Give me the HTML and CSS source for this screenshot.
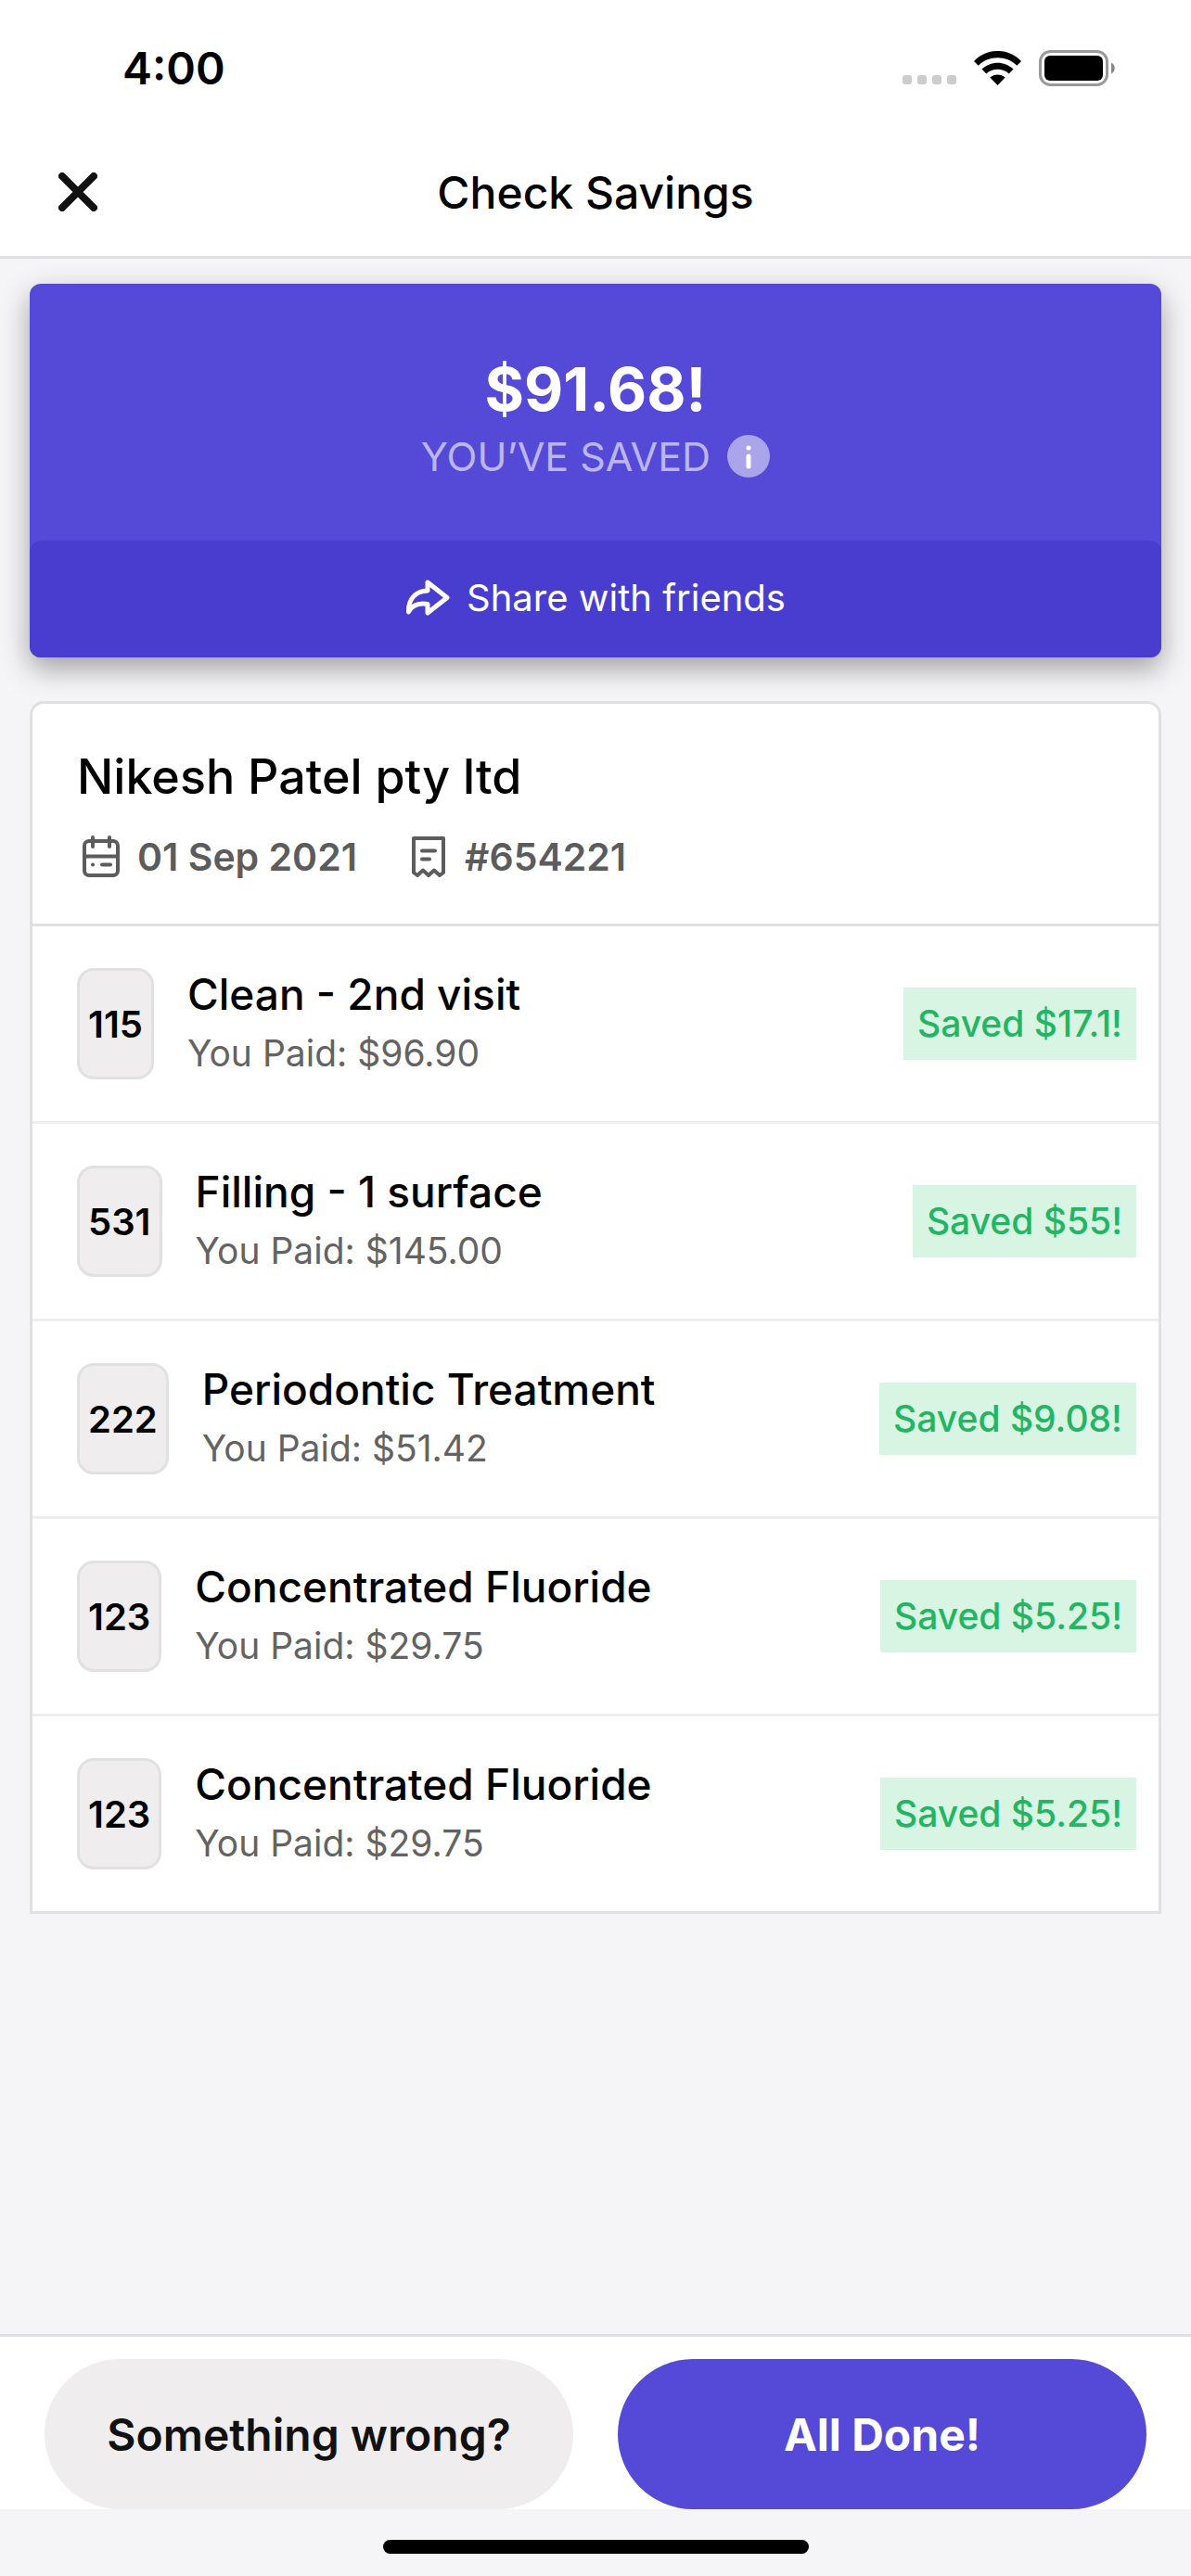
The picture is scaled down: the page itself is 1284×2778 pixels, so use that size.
FILE: index.html
```html
<!DOCTYPE html>
<html lang="en">
<head>
    <meta charset="UTF-8">
    <meta name="viewport" content="width=device-width, initial-scale=1.0">
    <title>Check Savings</title>
    <link rel="stylesheet" href="styles.css">
</head>
<body>
    <div class="status-bar">
        <span class="time">4:00</span>
        <div class="status-icons">
            <svg width="58" height="12" viewBox="0 0 58 12" fill="#cccccc">
                <rect x="0" width="10" height="10" rx="3"/>
                <rect x="16" width="10" height="10" rx="3"/>
                <rect x="32" width="10" height="10" rx="3"/>
                <rect x="48" width="10" height="10" rx="3"/>
            </svg>
            <svg width="51" height="38" viewBox="0 0 51 38">
                <path d="M0 11C14-3.700 37-3.700 51 11L46.300 15.700C35 4.500 16 4.500 4.700 15.700Z"/>
                <path d="M8.500 19.600C18 10.400 33 10.400 42.500 19.600L37.700 24.400C31 18.200 20 18.200 13.300 24.400Z"/>
                <path d="M17.300 28.600C22 24.500 29 24.500 33.700 28.600L25.500 37Z"/>
            </svg>
            <svg width="82" height="39" viewBox="0 0 82 39">
                <rect x="1.500" y="1.500" width="72" height="36" rx="11" fill="none" stroke="#999999" stroke-width="3"/>
                <rect x="6" y="6" width="63" height="27" rx="6"/>
                <path d="M78 13.500C83 16 83 23 78 25.500Z" fill="#888888"/>
            </svg>
        </div>
    </div>
    <header class="header">
        <button class="close-button" type="button" aria-label="Close">
            <svg width="42" height="42" viewBox="0 0 42 42" fill="none" stroke="#111111" stroke-width="8" stroke-linecap="round">
                <path d="M4 4L38 38M38 4L4 38"/>
            </svg>
        </button>
        <h1>Check Savings</h1>
    </header>
    <main class="content">
        <section class="savings">
            <div class="savings-total">
                <p class="amount">$91.68!</p>
                <div class="savings-label">
                    <span>YOU’VE SAVED</span>
                    <button class="info-button" type="button" aria-label="About your savings">
                        <svg width="46" height="46" viewBox="0 0 46 46">
                            <circle cx="23" cy="23" r="23" fill="#aaa4eb"/>
                            <circle cx="23" cy="14" r="2.500" fill="#ffffff"/>
                            <path d="M23 23V34" stroke="#ffffff" stroke-width="5" stroke-linecap="round"/>
                        </svg>
                    </button>
                </div>
            </div>
            <button class="share-button" type="button">
                <svg width="48" height="40" viewBox="0 0 48 40" fill="none" stroke="#ffffff" stroke-width="5" stroke-linejoin="round">
                    <path d="M24 4L45 20.500L24 37V27.500C14 26 7 29 3.500 36C3 22 11 13.500 24 13Z"/>
                </svg>
                Share with friends
            </button>
        </section>
        <section class="receipt">
            <div class="receipt-header">
                <h2>Nikesh Patel pty ltd</h2>
                <div class="receipt-meta">
                    <span class="meta-item">
                        <svg width="46" height="46" viewBox="0 0 46 46" fill="none" stroke="#5c5c5c" stroke-width="4" stroke-linecap="round">
                            <rect x="5" y="6" width="36" height="37" rx="5"/>
                            <path d="M5 22.500H41M14 2V12M32 2V12M24 31.500H33M14 31.500H14.100"/>
                        </svg>
                        01 Sep 2021
                    </span>
                    <span class="meta-item">
                        <svg width="46" height="46" viewBox="0 0 46 46" fill="none" stroke="#5c5c5c" stroke-width="4" stroke-linecap="round" stroke-linejoin="round">
                            <path d="M7 3H39V40L35 43L29 37.500L23 43L17 37.500L11 43L7 40Z"/>
                            <path d="M16 16.500H30M16 25.500H24"/>
                        </svg>
                        #654221
                    </span>
                </div>
            </div>
            <ul class="items">
                <li class="item">
                    <span class="code">115</span>
                    <div class="item-text">
                        <h3>Clean - 2nd visit</h3>
                        <p>You Paid: $96.90</p>
                    </div>
                    <span class="saved">Saved $17.1!</span>
                </li>
                <li class="item">
                    <span class="code">531</span>
                    <div class="item-text">
                        <h3>Filling - 1 surface</h3>
                        <p>You Paid: $145.00</p>
                    </div>
                    <span class="saved">Saved $55!</span>
                </li>
                <li class="item">
                    <span class="code">222</span>
                    <div class="item-text">
                        <h3>Periodontic Treatment</h3>
                        <p>You Paid: $51.42</p>
                    </div>
                    <span class="saved">Saved $9.08!</span>
                </li>
                <li class="item">
                    <span class="code">123</span>
                    <div class="item-text">
                        <h3>Concentrated Fluoride</h3>
                        <p>You Paid: $29.75</p>
                    </div>
                    <span class="saved">Saved $5.25!</span>
                </li>
                <li class="item">
                    <span class="code">123</span>
                    <div class="item-text">
                        <h3>Concentrated Fluoride</h3>
                        <p>You Paid: $29.75</p>
                    </div>
                    <span class="saved">Saved $5.25!</span>
                </li>
            </ul>
        </section>
    </main>
    <footer class="footer">
        <button class="button button-secondary" type="button">Something wrong?</button>
        <button class="button button-primary" type="button">All Done!</button>
    </footer>
    <div class="home-area">
        <div class="home-indicator"></div>
    </div>
</body>
</html>
```
FILE: styles.css
```css
* {
    box-sizing: border-box;
}
body {
    margin: 0;
    font-family: 'Inter', sans-serif;
    background-color: #f5f5f7;
    color: black;
    display: flex;
    flex-direction: column;
    min-height: 100vh;
}
h1, h2, h3, p, ul {
    margin: 0;
    padding: 0;
    font-weight: 500;
}
button {
    border: none;
    padding: 0;
    background: none;
    font-family: inherit;
    cursor: pointer;
}
svg {
    display: block;
    flex: none;
}

/* Status bar */
.status-bar {
    display: flex;
    align-items: center;
    justify-content: space-between;
    height: 138px;
    padding: 8px 82px 0 132px;
    background-color: white;
}
.time {
    font-size: 48px;
    font-weight: 600;
}
.status-icons {
    display: flex;
    align-items: flex-end;
    gap: 19px;
}

/* Header */
.header {
    display: grid;
    grid-template-columns: 1fr auto 1fr;
    align-items: center;
    height: 141px;
    padding: 0 63px;
    background-color: white;
    border-bottom: 3px solid #e0e0e2;
}
.close-button {
    justify-self: start;
}
.header h1 {
    font-size: 48px;
}

.content {
    flex: 1;
    padding: 27px 32px;
}

/* Savings card */
.savings {
    border-radius: 12px;
    background-color: #554ad7;
    color: white;
    box-shadow: 0 12px 30px rgba(0, 0, 0, 0.35);
}
.savings-total {
    padding: 75px 24px 58px;
    text-align: center;
}
.amount {
    font-size: 65px;
    line-height: 78px;
    font-weight: 700;
}
.savings-label {
    display: flex;
    align-items: center;
    justify-content: center;
    gap: 18px;
    font-size: 43px;
    line-height: 66px;
    color: #bbb6f1;
}
.share-button {
    display: flex;
    align-items: center;
    justify-content: center;
    gap: 18px;
    width: 100%;
    height: 126px;
    padding-bottom: 4px;
    border-radius: 12px;
    background-color: #493dd0;
    color: white;
    font-size: 40px;
}

/* Receipt */
.receipt {
    margin-top: 47px;
    border: 3px solid #e0e0e2;
    border-radius: 15px 15px 0 0;
    background-color: white;
}
.receipt-header {
    padding: 46px 48px 45px;
    border-bottom: 3px solid #e0e0e2;
}
.receipt-header h2 {
    font-size: 52px;
    line-height: 66px;
}
.receipt-meta {
    display: flex;
    gap: 54px;
    margin-top: 26px;
    padding-left: 3px;
    font-size: 41px;
    line-height: 54px;
    font-weight: 600;
    color: #5c5c5c;
}
.meta-item {
    display: flex;
    align-items: center;
    gap: 16px;
}
.items {
    list-style: none;
}
.item {
    display: flex;
    align-items: center;
    height: 213px;
    padding: 0 24px 0 48px;
    border-bottom: 3px solid #eeeeee;
}
.item:last-child {
    height: 210px;
    border-bottom: none;
}
.code {
    display: flex;
    align-items: center;
    height: 120px;
    padding: 0 9px;
    border: 3px solid #e2e1e2;
    border-radius: 18px;
    background-color: #efedee;
    font-size: 40px;
    font-weight: 600;
}
.item-text {
    flex: 1;
    margin-left: 36px;
    line-height: 64px;
}
.item-text h3 {
    font-size: 46px;
}
.item-text p {
    font-size: 39px;
    font-weight: 400;
    color: #636363;
}
.saved {
    padding: 0 15px;
    background-color: #d8f4e2;
    color: #23b564;
    font-size: 39px;
    line-height: 78px;
}

/* Footer */
.footer {
    display: flex;
    gap: 48px;
    padding: 24px 48px 0;
    background-color: white;
    border-top: 3px solid #e0e0e0;
}
.button {
    flex: 1;
    height: 162px;
    border-radius: 81px;
    font-size: 48px;
}
.button-secondary {
    background-color: #efedee;
    color: #111111;
    font-weight: 600;
}
.button-primary {
    background-color: #554ad7;
    color: white;
    font-weight: 700;
}
.home-area {
    padding: 33px 0 24px;
}
.home-indicator {
    width: 459px;
    height: 15px;
    margin: 0 auto;
    border-radius: 8px;
    background-color: black;
}
```
